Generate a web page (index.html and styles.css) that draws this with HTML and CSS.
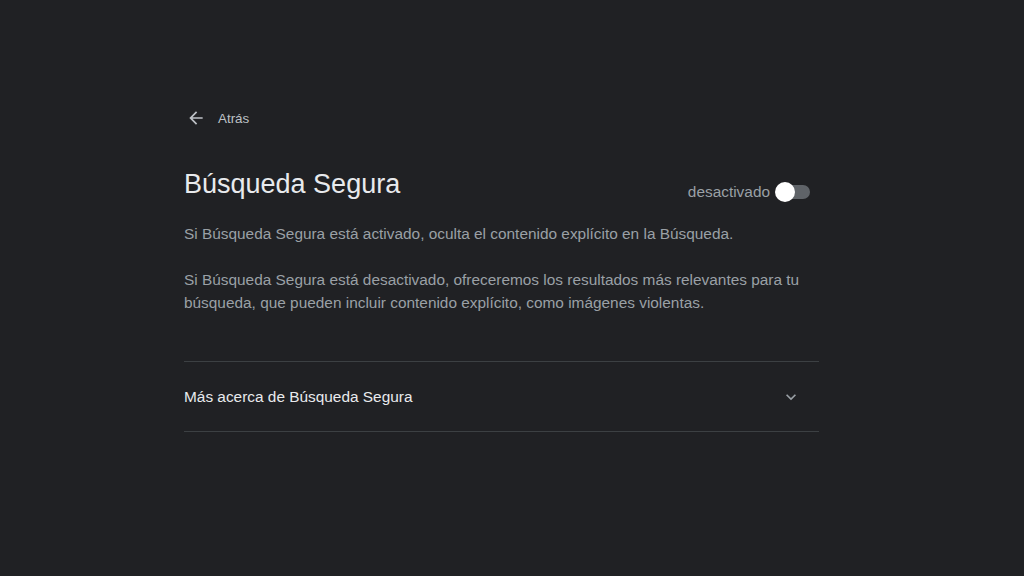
FILE: index.html
```html
<!DOCTYPE html>
<html lang="es">
<head>
  <meta charset="UTF-8" />
  <meta name="viewport" content="width=device-width, initial-scale=1.0" />
  <title>Búsqueda Segura</title>
  <link rel="stylesheet" href="styles.css">
</head>
<body>
  <div class="container">
    <a class="back" href="#">
      <svg width="20" height="20" viewBox="0 0 24 24"><path d="M20 11H7.83l5.59-5.59L12 4l-8 8 8 8 1.41-1.41L7.83 13H20v-2z" fill="#bdc1c6"/></svg>
      <span>Atrás</span>
    </a>

    <div class="header">
      <h1>Búsqueda Segura</h1>
      <label class="toggle">
        <span class="toggle-label">desactivado</span>
        <span class="switch"><span class="knob"></span></span>
      </label>
    </div>

    <p class="desc">Si Búsqueda Segura está activado, oculta el contenido explícito en la Búsqueda.</p>
    <p class="desc">Si Búsqueda Segura está desactivado, ofreceremos los resultados más relevantes para tu búsqueda, que pueden incluir contenido explícito, como imágenes violentas.</p>

    <div class="more">
      <span>Más acerca de Búsqueda Segura</span>
      <svg width="20" height="20" viewBox="0 0 24 24"><path d="M7.41 8.59L12 13.17l4.59-4.58L18 10l-6 6-6-6 1.41-1.41z" fill="#9aa0a6"/></svg>
    </div>
  </div>
</body>
</html>
```

FILE: styles.css
```css
body {
  font-family: 'Liberation Sans', Arial, sans-serif;
  background-color: #202124;
  color: #e8eaed;
  margin: 0;
  padding: 0;
}

.container {
  width: 635px;
  margin-left: 184px;
  padding-top: 108px;
}

.back {
  display: flex;
  align-items: center;
  gap: 12px;
  color: #bdc1c6;
  text-decoration: none;
  font-size: 13.4px;
  margin-left: 2px;
}

.header {
  display: flex;
  justify-content: space-between;
  align-items: flex-end;
  margin-top: 40px;
}

h1 {
  font-size: 27px;
  font-weight: normal;
  color: #e8eaed;
  margin: 0;
  line-height: 32px;
}

.toggle {
  display: flex;
  align-items: center;
  gap: 6px;
  margin-right: 9px;
  margin-bottom: -1px;
}

.toggle-label {
  font-size: 15.4px;
  color: #9aa0a6;
}

.switch {
  position: relative;
  width: 34px;
  height: 14px;
  border-radius: 7px;
  background-color: #5f6368;
}

.knob {
  position: absolute;
  left: -1px;
  top: -3px;
  width: 20px;
  height: 20px;
  border-radius: 50%;
  background-color: #fff;
}

.desc {
  font-size: 15.4px;
  line-height: 23px;
  color: #9aa0a6;
  margin: 0;
}

.header + .desc {
  margin-top: 22px;
}

.desc + .desc {
  margin-top: 23px;
}

.more {
  display: flex;
  justify-content: space-between;
  align-items: center;
  margin-top: 47px;
  height: 69px;
  border-top: 1px solid #3c4043;
  border-bottom: 1px solid #3c4043;
  font-size: 15.4px;
  color: #e8eaed;
}

.more svg {
  margin-right: 18px;
}
```
